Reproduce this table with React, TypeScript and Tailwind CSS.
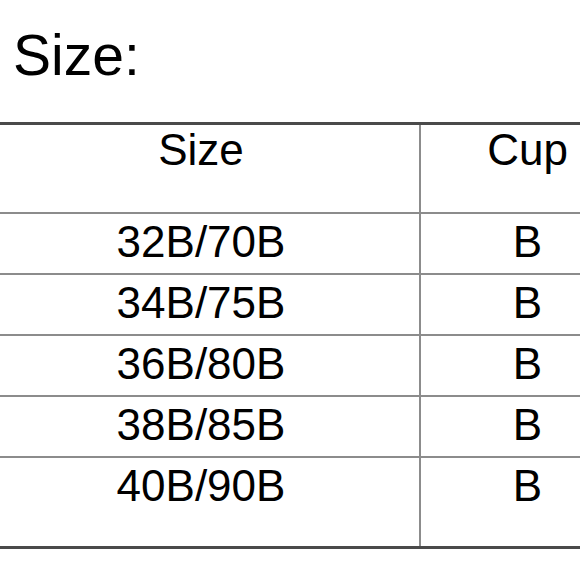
const rows = [
  { size: "32B/70B", cup: "B" },
  { size: "34B/75B", cup: "B" },
  { size: "36B/80B", cup: "B" },
  { size: "38B/85B", cup: "B" },
  { size: "40B/90B", cup: "B" },
];

const App = () => {
  return (
    <div className="w-[580px] h-[580px] overflow-hidden bg-white text-black font-['Liberation_Sans',Arial,sans-serif]">
      <h1 className="pt-[27px] pl-[13px] text-[57px] leading-none">Size:</h1>

      <div className="mt-[38px] ml-[-16px] w-[650px] border-t-[3px] border-b-[3px] border-[#4a4a4a]">
        {/* header */}
        <div className="grid grid-cols-[437px_213px] h-[89px] border-b-2 border-[#8c8c8c]">
          <div className="border-r-2 border-[#8c8c8c] pr-[1px] text-center text-[44px] leading-none pt-[3px]">Size</div>
          <div className="text-center text-[44px] leading-none pt-[3px]">Cup</div>
        </div>

        {rows.map((row, i) => {
          const last = i === rows.length - 1;
          return (
            <div
              key={row.size}
              className={
                last
                  ? "grid grid-cols-[437px_213px] h-[88px]"
                  : "grid grid-cols-[437px_213px] h-[61px] border-b-2 border-[#8c8c8c]"
              }
            >
              <div className="border-r-2 border-[#8c8c8c] pr-[1px] text-center text-[44px] leading-none pt-[6px]">
                {row.size}
              </div>
              <div className="text-center text-[44px] leading-none pt-[6px]">{row.cup}</div>
            </div>
          );
        })}
      </div>
    </div>
  );
};

export default App;
